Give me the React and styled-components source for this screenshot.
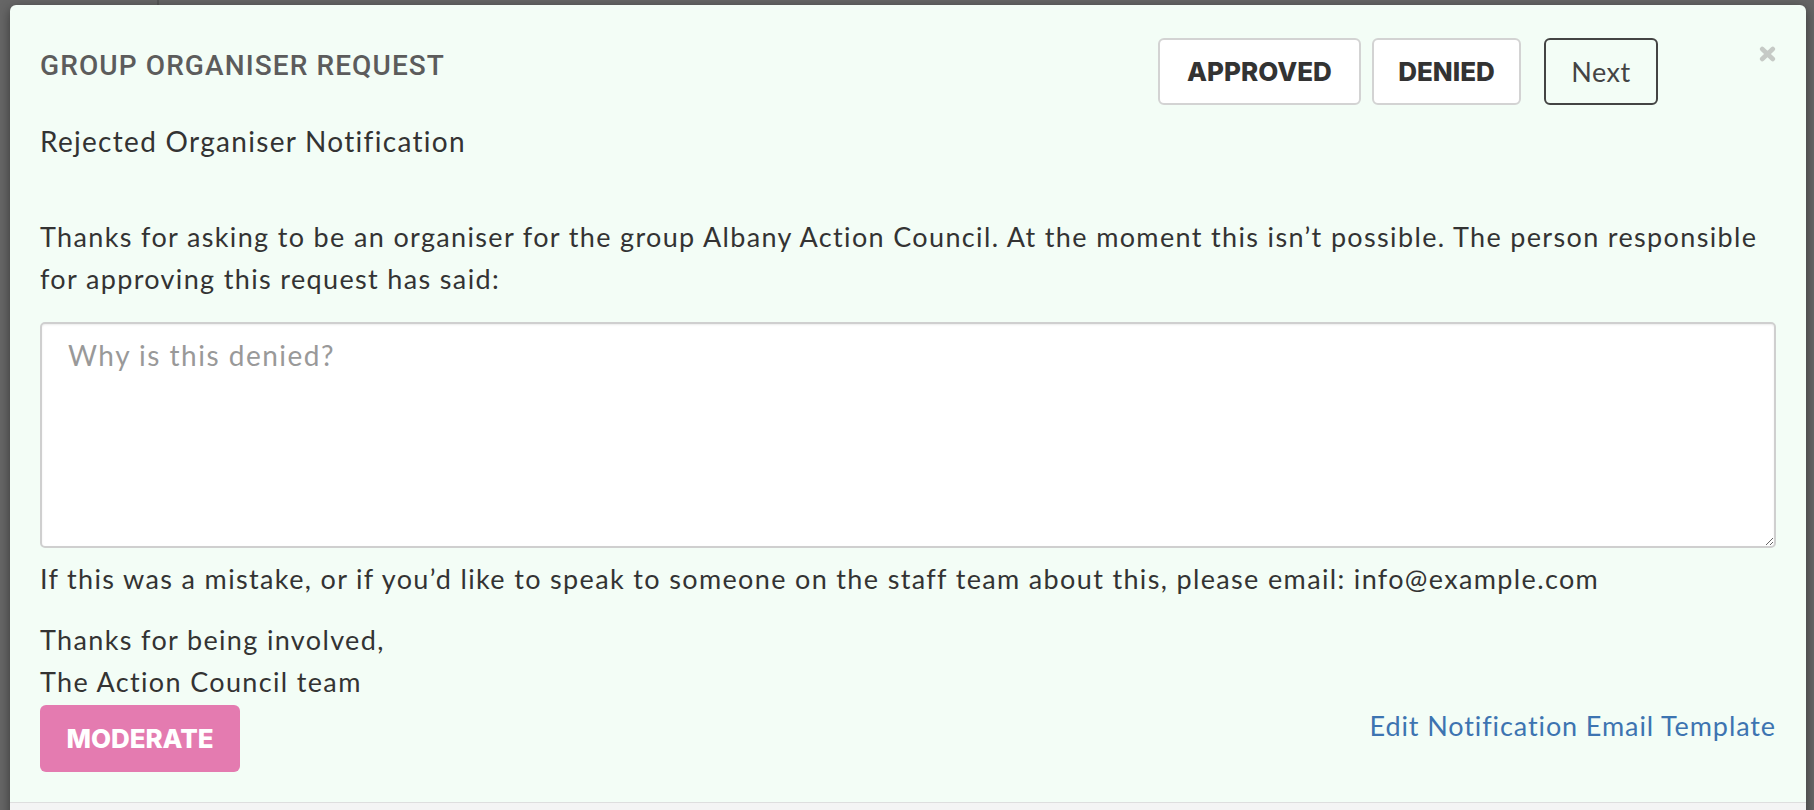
import React from "react";
import styled, { createGlobalStyle } from "styled-components";

const Global = createGlobalStyle`
  html, body { margin: 0; padding: 0; overflow: hidden; }
  body { font-family: "Lato", "Noto Sans", sans-serif; }
  * { box-sizing: border-box; }
`;

const Backdrop = styled.div`
  width: 1814px;
  height: 810px;
  overflow: hidden;
  padding: 5px 8px 0 10px;
  background-color: #666;
  background-image: linear-gradient(to right, transparent 157px, #575757 157px, #575757 159px, transparent 159px);
`;

const Modal = styled.div`
  width: 1796px;
  background: #f3fdf6;
  border-radius: 6px;
  box-shadow: 0 3px 12px rgba(0, 0, 0, 0.45);
  overflow: hidden;
`;

const Body = styled.div`
  padding: 33px 30px 30px 30px;
  color: #333;
  font-size: 27px;
  line-height: 42px;
  letter-spacing: 1.35px;
`;

const Header = styled.div`
  display: flex;
  justify-content: space-between;
  align-items: flex-start;
`;

const TitleCol = styled.div`
  display: flex;
  flex-direction: column;
`;

const Title = styled.h4`
  margin: 14px 0 0 0;
  font-family: "Roboto", "Liberation Sans", sans-serif;
  font-weight: 500;
  font-size: 28px;
  line-height: 28px;
  color: #5c5c5c;
  letter-spacing: 1.1px;
`;

const Subtitle = styled.div`
  margin-top: 40px;
  font-size: 28px;
  line-height: 42px;
  letter-spacing: 1.3px;
  color: #333;
`;

const Actions = styled.div`
  display: flex;
  align-items: flex-start;
`;

const StatusButton = styled.button`
  width: ${(p) => p.$w}px;
  height: 67px;
  padding: 0;
  margin-right: ${(p) => p.$gap || 0}px;
  background: #fff;
  border: 2px solid #d3d3d3;
  border-radius: 6px;
  font-family: "Inter", "Lato", sans-serif;
  font-weight: 800;
  font-size: 26px;
  letter-spacing: 0;
  color: #333;
  cursor: pointer;
`;

const NextButton = styled.button`
  width: 114px;
  height: 67px;
  padding: 0;
  background: transparent;
  border: 2px solid #444;
  border-radius: 6px;
  font-family: "Lato", sans-serif;
  font-size: 27px;
  letter-spacing: 0.5px;
  color: #444;
  cursor: pointer;
`;

const Close = styled.button`
  margin: 8px 0 0 101px;
  padding: 0;
  width: 17px;
  height: 16px;
  border: none;
  background: none;
  display: flex;
  cursor: pointer;
`;

const Para = styled.p`
  margin: ${(p) => p.$mt || 0}px 0 0 0;
`;

const Reason = styled.textarea`
  display: block;
  width: 100%;
  height: 226px;
  margin-top: 22px;
  padding: 10px 26px;
  border: 2px solid #cfcfcf;
  border-radius: 5px;
  background: #fff;
  box-shadow: inset 0 1px 2px rgba(0, 0, 0, 0.08);
  font-family: inherit;
  font-size: 28px;
  line-height: 42px;
  letter-spacing: 1.5px;
  color: #333;
  &::placeholder { color: #999; }
`;

const BottomRow = styled.div`
  margin-top: 2px;
  display: flex;
  justify-content: space-between;
  align-items: flex-start;
`;

const ModerateButton = styled.button`
  width: 200px;
  height: 67px;
  border: none;
  border-radius: 6px;
  background: #e47bb0;
  color: #fff;
  font-family: "Inter", "Lato", sans-serif;
  font-weight: 800;
  font-size: 26px;
  letter-spacing: -0.1px;
  cursor: pointer;
`;

const TemplateLink = styled.a`
  color: #3d74b1;
  text-decoration: none;
  font-size: 27px;
  line-height: 42px;
  letter-spacing: 0.9px;
`;

const Footer = styled.div`
  height: 60px;
  border-top: 1px solid #dedede;
  background: #f4f4f4;
`;

export default function App() {
  return (
    <>
      <Global />
      <Backdrop>
        <Modal>
          <Body>
            <Header>
              <TitleCol>
                <Title>GROUP ORGANISER REQUEST</Title>
                <Subtitle>Rejected Organiser Notification</Subtitle>
              </TitleCol>
              <Actions>
                <StatusButton $w={203} $gap={11}>APPROVED</StatusButton>
                <StatusButton $w={149} $gap={23}>DENIED</StatusButton>
                <NextButton>Next</NextButton>
                <Close aria-label="Close">
                  <svg width="17" height="16" viewBox="0 0 17 16">
                    <path d="M3.2 3 L13.8 13 M13.8 3 L3.2 13" stroke="#c6cac6" strokeWidth="4.6" strokeLinecap="round" />
                  </svg>
                </Close>
              </Actions>
            </Header>
            <Para $mt={54}>
              Thanks for asking to be an organiser for the group Albany Action Council. At the moment this isn’t possible. The person responsible for approving this request has said:
            </Para>
            <Reason placeholder="Why is this denied?" />
            <Para $mt={10}>
              If this was a mistake, or if you’d like to speak to someone on the staff team about this, please email: info@example.com
            </Para>
            <Para $mt={19}>
              Thanks for being involved,
              <br />
              The Action Council team
            </Para>
            <BottomRow>
              <ModerateButton>MODERATE</ModerateButton>
              <TemplateLink href="#">Edit Notification Email Template</TemplateLink>
            </BottomRow>
          </Body>
          <Footer />
        </Modal>
      </Backdrop>
    </>
  );
}
